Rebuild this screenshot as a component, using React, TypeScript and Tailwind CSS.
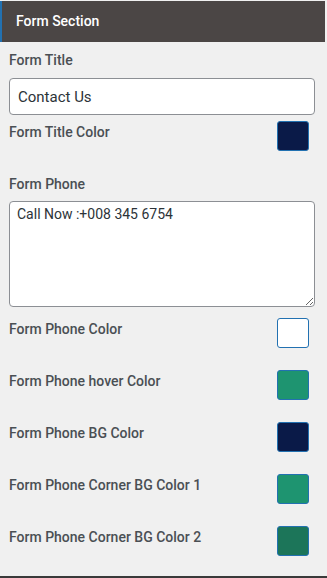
import React from 'react';

const colorRows = [
  { label: 'Form Phone Color', color: '#ffffff' },
  { label: 'Form Phone hover Color', color: '#1e9470' },
  { label: 'Form Phone BG Color', color: '#0a1a48' },
  { label: 'Form Phone Corner BG Color 1', color: '#1e9470' },
  { label: 'Form Phone Corner BG Color 2', color: '#1c7559' },
];

function ColorRow({ label, color, className = '' }: { label: string; color: string; className?: string }) {
  return (
    <div className={`flex items-start justify-between pr-[18px] ${className}`}>
      <span className="mt-px text-[14px] leading-[20px] font-medium text-[#4a4f54]">{label}</span>
      <span
        className="block w-[32px] h-[30px] rounded-[3px] border border-[#2271b1]"
        style={{ backgroundColor: color }}
      />
    </div>
  );
}

export default function App() {
  return (
    <div
      className="w-[327px] h-[578px] bg-[#f0f0f0] flex flex-col border-b-2 border-[#3a3a3a] overflow-hidden"
      style={{ fontFamily: 'Roboto, "Liberation Sans", sans-serif' }}
    >
      {/* Header */}
      <div className="mt-px mr-[2px] h-[41px] bg-[#4b4645] border-l-2 border-[#2271b1] flex items-center pl-[14px]">
        <span className="text-[14px] font-medium text-white">Form Section</span>
      </div>

      <div className="pl-[9px]">
        <div className="mt-[8px] text-[14px] leading-[20px] font-medium text-[#4a4f54]">Form Title</div>
        <input
          readOnly
          value="Contact Us"
          className="mt-[8px] block w-[306px] h-[37px] rounded-[4px] border border-[#8c8f94] bg-white px-[8px] text-[15px] text-[#2c3338] outline-none"
        />
        <ColorRow className="mt-[6px]" label="Form Title Color" color="#0a1a48" />

        <div className="mt-[23px] text-[14px] leading-[20px] font-medium text-[#4a4f54]">Form Phone</div>
        <textarea
          readOnly
          value="Call Now :+008 345 6754"
          className="mt-[7px] block w-[306px] h-[106px] rounded-[4px] border border-[#8c8f94] bg-white px-[7px] py-[2px] text-[14px] leading-[20px] text-[#2c3338] outline-none"
        />
        {colorRows.map((r, i) => (
          <ColorRow key={r.label} className={i === 0 ? 'mt-[11px]' : 'mt-[22px]'} label={r.label} color={r.color} />
        ))}
      </div>
    </div>
  );
}
